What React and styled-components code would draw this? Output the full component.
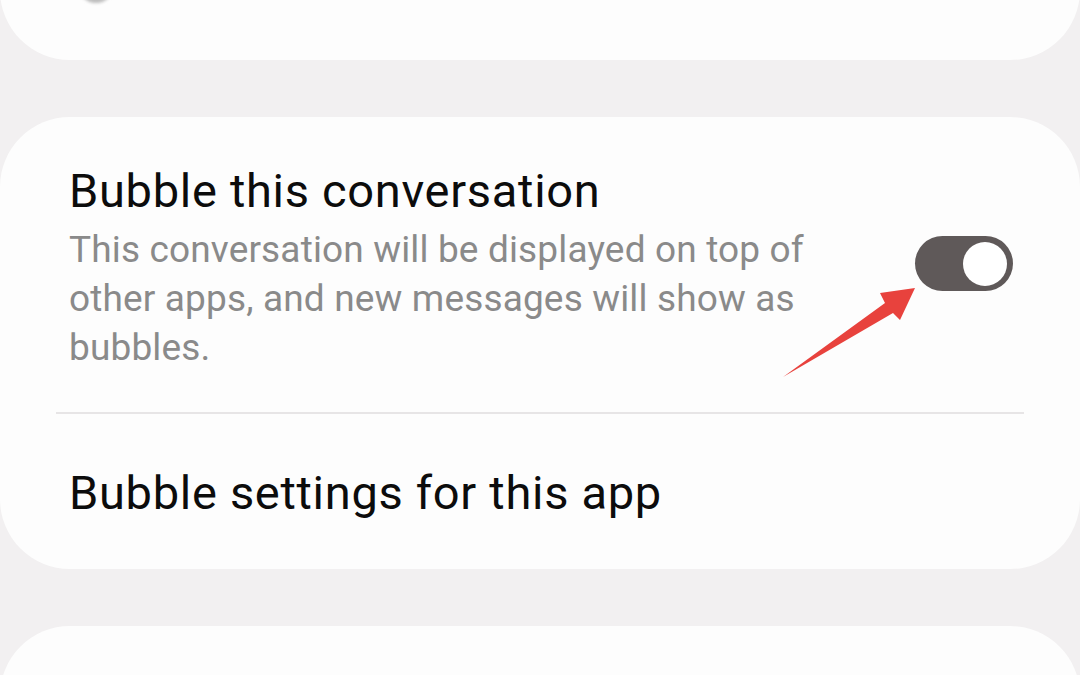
import React from "react";
import styled, { createGlobalStyle } from "styled-components";

const Global = createGlobalStyle`
  html, body { margin: 0; padding: 0; background: #f2f0f1; }
  body { font-family: Roboto, "Noto Sans", sans-serif; overflow: hidden; }
  #root { width: 1080px; height: 675px; overflow: hidden; }
`;

const Page = styled.div`
  width: 1080px;
  height: 675px;
  display: flex;
  flex-direction: column;
  gap: 57px;
  background: #f2f0f1;
  overflow: hidden;
`;

const Card = styled.div`
  position: relative;
  background: #fdfdfd;
  border-radius: 70px;
  flex-shrink: 0;
`;

const TopCard = styled(Card)`
  margin-top: -110px;
  height: 170px;
  padding-left: 78px;
  box-sizing: border-box;
  display: flex;
  align-items: flex-end;
  padding-bottom: 57px;
`;

const Avatar = styled.div`
  width: 36px;
  height: 36px;
  border-radius: 50%;
  background: #bdbdbd;
  filter: blur(1.5px);
`;

const MainCard = styled(Card)`
  padding: 46px 67px 48px 69px;
`;

const ToggleRow = styled.div`
  display: flex;
  align-items: center;
  gap: 40px;
`;

const TextCol = styled.div`
  flex: 1;
  display: flex;
  flex-direction: column;
  gap: 6px;
`;

const Title = styled.div`
  font-size: 47px;
  line-height: 56px;
  color: #0c0c0c;
  letter-spacing: 0.7px;
`;

const Desc = styled.div`
  font-size: 37px;
  line-height: 49px;
  color: #8a8a8a;
  letter-spacing: 0.15px;
`;

const Track = styled.div`
  width: 98px;
  height: 55px;
  border-radius: 28px;
  background: #5f5959;
  display: flex;
  align-items: center;
  justify-content: flex-end;
  padding: 0 6px;
  box-sizing: border-box;
  margin-bottom: 8px;
  flex-shrink: 0;
`;

const Thumb = styled.div`
  width: 44px;
  height: 44px;
  border-radius: 50%;
  background: #ffffff;
`;

const Divider = styled.div`
  height: 2px;
  background: #e7e5e6;
  margin: 40px -11px 51px -13px;
`;

const Arrow = styled.svg`
  position: absolute;
  left: 0;
  top: 0;
  width: 1080px;
  height: 452px;
  pointer-events: none;
`;

const BottomCard = styled(Card)`
  height: 200px;
`;

export default function App() {
  return (
    <>
      <Global />
      <Page>
        <TopCard>
          <Avatar />
        </TopCard>
        <MainCard>
          <ToggleRow>
            <TextCol>
              <Title>Bubble this conversation</Title>
              <Desc>
                This conversation will be displayed on top of other apps, and
                new messages will show as bubbles.
              </Desc>
            </TextCol>
            <Track>
              <Thumb />
            </Track>
          </ToggleRow>
          <Divider />
          <Title>Bubble settings for this app</Title>
          <Arrow viewBox="0 0 1080 452">
            <polygon
              points="915,171 880,176 885,186 783,260 893,196 900,203"
              fill="#e8423d"
            />
          </Arrow>
        </MainCard>
        <BottomCard />
      </Page>
    </>
  );
}
